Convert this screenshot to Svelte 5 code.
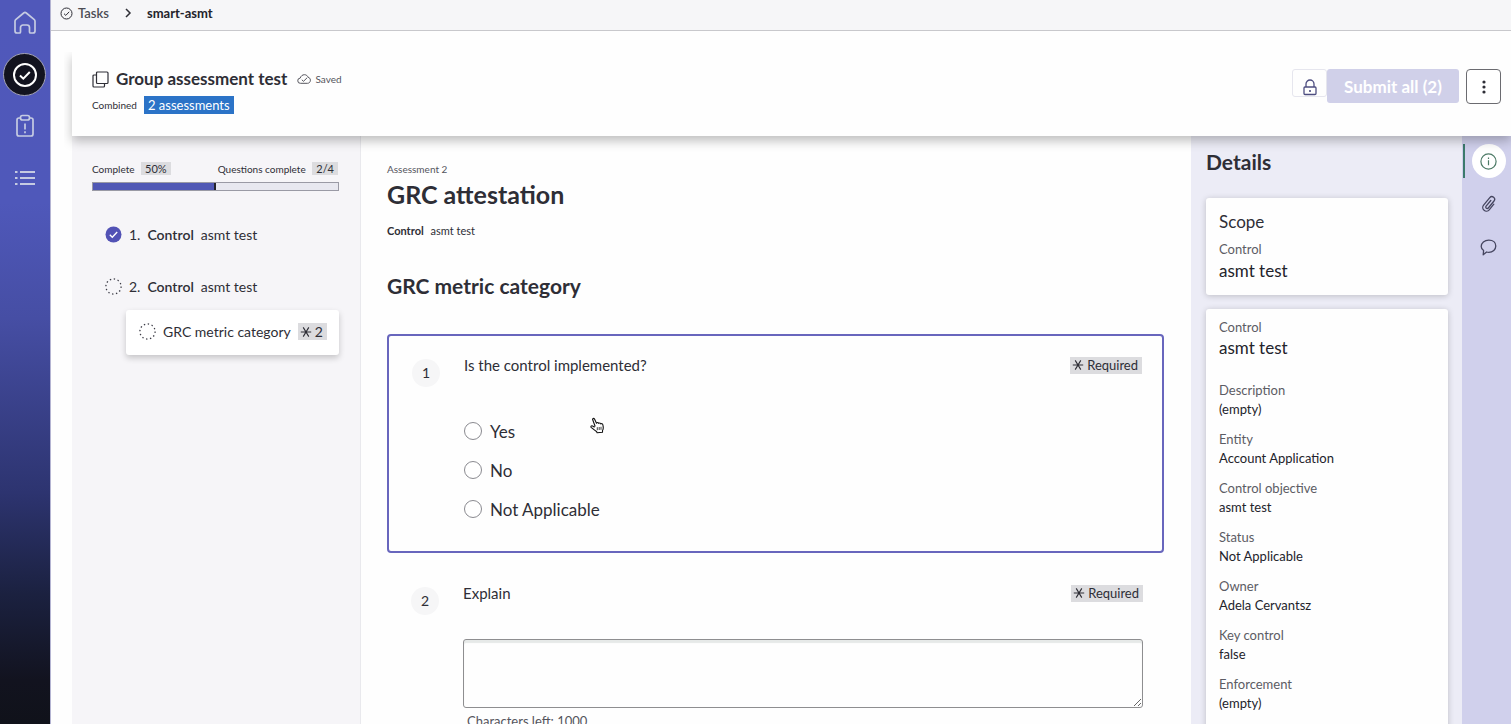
<script lang="ts">
    let answer = $state('');
    let explanation = $state('');

    const maxLength = 1000;
    const charsLeft = $derived(maxLength - explanation.length);

    const options = ['Yes', 'No', 'Not Applicable'];

    const details = [
        { label: 'Description', value: '(empty)' },
        { label: 'Entity', value: 'Account Application' },
        { label: 'Control objective', value: 'asmt test' },
        { label: 'Status', value: 'Not Applicable' },
        { label: 'Owner', value: 'Adela Cervantsz' },
        { label: 'Key control', value: 'false' },
        { label: 'Enforcement', value: '(empty)' },
    ];

    const complete = 50;
</script>

{#snippet asterisk()}
    <svg width="12" height="12" viewBox="0 0 12 12" fill="none" stroke="currentColor" stroke-width="1.1">
        <path d="M.8 6h10.400M3.200 1.400l5.600 9.200M8.800 1.400l-5.600 9.200" />
    </svg>
{/snippet}

{#snippet dotted()}
    <svg width="17" height="17" viewBox="0 0 17 17" fill="none" stroke="#3c3c46" stroke-width="1.300">
        <circle cx="8.500" cy="8.500" r="7.600" stroke-dasharray="1.400 2.580" />
    </svg>
{/snippet}

<div class="app">
    <nav class="sidebar" aria-label="Main">
        <a href="#home" class="nav-link" aria-label="Home">
            <svg width="24" height="24" viewBox="0 0 24 24" fill="none" stroke="currentColor" stroke-width="1.7" stroke-linejoin="round">
                <path d="M2 10.200a2 2 0 0 1 .7-1.500L10.700 2a2 2 0 0 1 2.600 0l8 6.700a2 2 0 0 1 .7 1.500V20a2 2 0 0 1-2 2h-2.500a1 1 0 0 1-1-1v-4.500a2.500 2.500 0 0 0-2.500-2.500h-4a2.500 2.500 0 0 0-2.500 2.500V21a1 1 0 0 1-1 1H4a2 2 0 0 1-2-2z" />
            </svg>
        </a>
        <a href="#tasks" class="nav-link active" aria-label="Tasks">
            <svg width="26" height="26" viewBox="0 0 26 26" fill="none" stroke="currentColor" stroke-width="2">
                <circle cx="13" cy="13" r="11" />
                <path d="M8 13.500l3.300 3.200 6.500-6.700" />
            </svg>
        </a>
        <a href="#issues" class="nav-link" aria-label="Issues">
            <svg width="20" height="24" viewBox="0 0 20 24" fill="none" stroke="currentColor" stroke-width="1.7">
                <path d="M5.500 4H4a2 2 0 0 0-2 2v14a2 2 0 0 0 2 2h12a2 2 0 0 0 2-2V6a2 2 0 0 0-2-2h-1.500" />
                <rect x="5.500" y="1.500" width="9" height="4.500" rx="2" />
                <path d="M10 9.500v6M10 17.200v2" />
            </svg>
        </a>
        <a href="#lists" class="nav-link" aria-label="Lists">
            <svg width="20" height="16" viewBox="0 0 20 16" fill="none" stroke="currentColor" stroke-width="1.8">
                <path d="M0 2h2.500M5 2h15M0 8h2.500M5 8h15M0 14h2.500M5 14h15" />
            </svg>
        </a>
    </nav>

    <div class="content">
        <div class="breadcrumb">
            <svg width="13" height="13" viewBox="0 0 13 13" fill="none" stroke="currentColor">
                <circle cx="6.500" cy="6.500" r="5.500" />
                <path d="M4 6.700l1.800 1.700 3.400-3.600" />
            </svg>
            <a href="#tasks">Tasks</a>
            <svg class="chevron" width="8" height="10" viewBox="0 0 8 10" fill="none" stroke="currentColor" stroke-width="1.500">
                <path d="M2 1l4 4-4 4" />
            </svg>
            <strong>smart-asmt</strong>
        </div>

        <div class="workspace">
            <header class="header">
                <div>
                    <div class="title-row">
                        <svg width="17" height="17" viewBox="0 0 17 17" fill="none" stroke="currentColor" stroke-width="1.200">
                            <rect x="4.500" y="1" width="11.500" height="11.500" rx="1" />
                            <path d="M4.500 4H2a1 1 0 0 0-1 1v10a1 1 0 0 0 1 1h9.500a1 1 0 0 0 1-1v-2.500" />
                        </svg>
                        <h1>Group assessment test</h1>
                        <span class="saved">
                            <svg width="14" height="10" viewBox="0 0 14 10" fill="none" stroke="currentColor">
                                <path d="M3.500 9.300a2.600 2.600 0 0 1-.3-5.200C3.800 2 5.500.7 7.500.7c1.700 0 3 1 3.600 2.600 1.300.2 2.300 1.400 2.300 2.900 0 1.800-1.200 3.100-2.900 3.100z" />
                                <path d="M4.800 5.800l1.700 1.500 3.700-3.600" />
                            </svg>
                            Saved
                        </span>
                    </div>
                    <div class="sub-row">
                        <span>Combined</span>
                        <span class="count">2 assessments</span>
                    </div>
                </div>
                <div class="actions">
                    <div class="submit-group">
                        <span class="lock">
                            <svg width="14" height="17" viewBox="0 0 14 17" fill="none" stroke="currentColor" stroke-width="1.300">
                                <rect x="1" y="8" width="12" height="7.500" rx="1" />
                                <path d="M3 8V5a4 4 0 0 1 8 0v3" />
                                <path d="M6.200 12h1.600" stroke-width="1.800" />
                            </svg>
                        </span>
                        <button class="submit" disabled>Submit all (2)</button>
                    </div>
                    <button class="more" aria-label="More actions">
                        <svg width="4" height="14" viewBox="0 0 4 14" fill="currentColor">
                            <circle cx="2" cy="2" r="1.600" />
                            <circle cx="2" cy="7" r="1.600" />
                            <circle cx="2" cy="12" r="1.600" />
                        </svg>
                    </button>
                </div>
            </header>

            <div class="columns">
                <aside class="outline">
                    <div class="progress-labels">
                        <span>Complete <span class="tag">{complete}%</span></span>
                        <span>Questions complete <span class="tag">2/4</span></span>
                    </div>
                    <div class="progress">
                        <div class="progress-fill" style="width: {complete}%"></div>
                    </div>

                    <a href="#control-1" class="step">
                        <svg width="17" height="17" viewBox="0 0 17 17">
                            <circle cx="8.500" cy="8.500" r="8" fill="#5252b5" />
                            <path d="M4.800 8.800l2.500 2.400 4.900-5.200" fill="none" stroke="#fff" stroke-width="1.400" />
                        </svg>
                        <span>1.</span><b>Control</b><span>asmt test</span>
                    </a>
                    <a href="#control-2" class="step">
                        {@render dotted()}
                        <span>2.</span><b>Control</b><span>asmt test</span>
                    </a>
                    <a href="#metric" class="step-card">
                        {@render dotted()}
                        <span>GRC metric category</span>
                        <span class="tag required-count">{@render asterisk()}2</span>
                    </a>
                </aside>

                <main class="assessment">
                    <p class="eyebrow">Assessment 2</p>
                    <h2>GRC attestation</h2>
                    <p class="target"><b>Control</b> <span>asmt test</span></p>
                    <h3>GRC metric category</h3>

                    <section class="question selected">
                        <span class="number">1</span>
                        <div class="question-body">
                            <div class="question-head">
                                <span id="q1">Is the control implemented?</span>
                                <span class="tag required">{@render asterisk()}Required</span>
                            </div>
                            <div class="options" role="radiogroup" aria-labelledby="q1">
                                {#each options as option}
                                    <label class="option">
                                        <input type="radio" name="implemented" value={option} bind:group={answer} />
                                        {option}
                                    </label>
                                {/each}
                            </div>
                        </div>
                        <svg class="hand" width="15" height="17" viewBox="0 0 15 17" fill="#fff" stroke="#111" stroke-width="1.100" stroke-linejoin="round">
                            <path d="M5.200 9.500L2.700 2.800C2.300 1.500 3.800.8 4.500 2l2 4.300c.4-1 1.900-1 2.200.1.600-.7 1.800-.5 2 .5.900-.6 2.100 0 2.200 1.100.500 2.200.9 3.600-.4 5.500v1.700l-5.400.6-.6-1.400C4.500 13.300 3.500 12.400 1.400 10.600.3 9.500 1.400 8.400 2.600 9l2 1.200" />
                            <path d="M7.300 10.200v3M9.200 10v3M11 9.800v3" fill="none" stroke-width=".8" />
                        </svg>
                    </section>

                    <section class="question">
                        <span class="number">2</span>
                        <div class="question-body">
                            <div class="question-head">
                                <label for="explain">Explain</label>
                                <span class="tag required">{@render asterisk()}Required</span>
                            </div>
                            <textarea id="explain" maxlength={maxLength} bind:value={explanation}></textarea>
                            <p class="hint">Characters left: {charsLeft}</p>
                        </div>
                    </section>
                </main>

                <aside class="details">
                    <h2>Details</h2>
                    <div class="card">
                        <h3>Scope</h3>
                        <div class="label">Control</div>
                        <div class="value large">asmt test</div>
                    </div>
                    <div class="card">
                        <div class="label">Control</div>
                        <div class="value large">asmt test</div>
                        <dl>
                            {#each details as item}
                                <div class="field">
                                    <dt class="label">{item.label}</dt>
                                    <dd class="value">{item.value}</dd>
                                </div>
                            {/each}
                        </dl>
                    </div>
                </aside>

                <div class="rail">
                    <button class="rail-btn active" aria-label="Details">
                        <svg width="17" height="17" viewBox="0 0 17 17" fill="none" stroke="currentColor" stroke-width="1.200">
                            <circle cx="8.500" cy="8.500" r="7.600" />
                            <path d="M8.500 7.300v5M8.500 4.500v1.500" />
                        </svg>
                    </button>
                    <button class="rail-btn" aria-label="Attachments">
                        <svg width="16" height="18" viewBox="0 0 16 18" fill="none" stroke="currentColor" stroke-width="1.300" stroke-linecap="round">
                            <path d="M12.800 9.200l-4.600 5.600a3.600 3.600 0 0 1-5.600-4.600l6.200-7.600a2.700 2.700 0 0 1 4.200 3.400l-5.700 7a1.400 1.400 0 0 1-2.200-1.800l4.700-5.700" />
                        </svg>
                    </button>
                    <button class="rail-btn" aria-label="Comments">
                        <svg width="17" height="17" viewBox="0 0 17 17" fill="none" stroke="currentColor" stroke-width="1.300" stroke-linejoin="round">
                            <path d="M3.200 15.800l.4-4.200C2.100 10.500 1.200 9.200 1.200 7.600 1.200 4 4.500 1.200 8.800 1.200s7 2.400 7 5.800-3 6.300-7 6.300c-.8 0-1.500-.1-2.200-.3z" />
                        </svg>
                    </button>
                </div>
            </div>
        </div>
    </div>

    <svg class="pointer" width="12" height="17" viewBox="0 0 12 17">
        <path d="M1 1v12.500l3-2.800 2.200 5 2.300-1-2.200-4.800h4z" fill="#000" stroke="#fff" stroke-width=".8" />
    </svg>
</div>

<style>
    :global(body) {
        margin: 0;
    }

    .app {
        display: flex;
        position: relative;
        height: 100vh;
        overflow: hidden;
        background: #fefefe;
        color: #2e2e36;
        font-family: Lato, sans-serif;
        font-size: 16px;
    }

    .app * {
        box-sizing: border-box;
    }

    h1, h2, h3, p, dl, dd {
        margin: 0;
    }

    svg {
        flex-shrink: 0;
    }

    a {
        color: inherit;
        text-decoration: none;
    }

    button {
        font-family: inherit;
        padding: 0;
    }

    .sidebar {
        display: flex;
        flex-direction: column;
        align-items: center;
        gap: 8px;
        width: 51px;
        flex-shrink: 0;
        padding: 1px 1px 0 0;
        border-right: 1px solid #b4b4d2;
        background: linear-gradient(#5058ba 0%, #4f58ba 28%, #464ea4 44%, #2d3470 68%, #1b2140 82%, #12131f 94%, #10121a 100%);
    }

    .nav-link {
        display: flex;
        align-items: center;
        justify-content: center;
        width: 43px;
        height: 44px;
        color: #c5cbe2;
    }

    .nav-link.active {
        height: 43px;
        border: 1px solid #a3a3b4;
        border-radius: 50%;
        background: #12131f;
        color: #fff;
    }

    .content {
        display: flex;
        flex-direction: column;
        flex: 1;
        min-width: 0;
    }

    .breadcrumb {
        display: flex;
        align-items: center;
        height: 31px;
        flex-shrink: 0;
        padding: 0 9px 4px;
        border-bottom: 1px solid #c8c8cc;
        background: #f6f6f8;
        font-size: 13px;
    }

    .breadcrumb a {
        margin-left: 5px;
        color: #4c4c54;
        font-weight: 600;
    }

    .breadcrumb strong {
        color: #23232b;
    }

    .chevron {
        margin: 0 15px;
    }

    .workspace {
        display: flex;
        flex-direction: column;
        flex: 1;
        min-height: 0;
        margin: 21px 0 0 21px;
    }

    .header {
        display: flex;
        justify-content: space-between;
        position: relative;
        z-index: 1;
        height: 84px;
        flex-shrink: 0;
        padding: 15px 10px 0 20px;
        background: #fefefe;
        box-shadow: 0 5px 10px rgba(0, 0, 0, 0.25);
        clip-path: inset(0 0 -20px -8px);
    }

    .title-row {
        display: flex;
        align-items: center;
        height: 24px;
    }

    h1 {
        margin: 0 10px 0 7px;
        font-size: 17px;
        line-height: 24px;
    }

    .saved {
        display: flex;
        align-items: center;
        gap: 4px;
        color: #55555d;
        font-size: 10px;
    }

    .sub-row {
        display: flex;
        align-items: center;
        gap: 7px;
        margin-top: 5px;
        font-size: 10px;
    }

    .count {
        padding: 0 4px;
        background: #2b73c7;
        color: #fff;
        font-size: 13px;
        line-height: 18px;
    }

    .actions {
        display: flex;
        gap: 7px;
        margin-top: 2px;
    }

    .submit-group {
        display: flex;
        align-items: flex-start;
    }

    .lock {
        display: flex;
        align-items: flex-end;
        justify-content: center;
        width: 35px;
        height: 28px;
        border: 1px solid #e6e6ee;
        border-radius: 3px;
        color: #4d4d80;
    }

    .submit {
        width: 132px;
        height: 34px;
        border: 0;
        border-radius: 3px;
        background: #d0d0e9;
        color: #fff;
        font-size: 17px;
        font-weight: 700;
    }

    .more {
        display: flex;
        align-items: center;
        justify-content: center;
        width: 35px;
        height: 35px;
        border: 1px solid #6b6b70;
        border-radius: 4px;
        background: #fff;
        color: #2e2e36;
    }

    .columns {
        display: flex;
        flex: 1;
        min-height: 0;
    }

    .outline {
        width: 289px;
        flex-shrink: 0;
        padding: 25px 21px 0 20px;
        border-right: 1px solid #e9e9ed;
        background: #f6f5f8;
    }

    .tag {
        display: inline-block;
        padding: 0 4px;
        background: #dcdcdf;
    }

    .progress-labels {
        display: flex;
        justify-content: space-between;
        margin-right: 1px;
        font-size: 10px;
        line-height: 16px;
    }

    .progress-labels .tag {
        margin-left: 4px;
        font-size: 11px;
        line-height: 13px;
    }

    .progress {
        height: 9px;
        margin-top: 5px;
        border: 1px solid #9a9aa5;
        background: #e8e8f0;
    }

    .progress-fill {
        height: 100%;
        border-right: 2px solid #23232b;
        background: #5058b5;
    }

    .step {
        display: flex;
        align-items: center;
        height: 24px;
        margin: 31px 0 0 13px;
        font-size: 14px;
    }

    .step + .step {
        margin-top: 28px;
    }

    .step span {
        margin-left: 7px;
    }

    .step b {
        margin-left: 7px;
        font-weight: 600;
    }

    .step-card {
        display: flex;
        align-items: center;
        gap: 7px;
        height: 45px;
        margin: 12px 0 0 34px;
        padding: 0 13px 2px;
        border-radius: 3px;
        background: #fff;
        box-shadow: 0 3px 6px rgba(0, 0, 0, 0.2);
        font-size: 14px;
        white-space: nowrap;
    }

    .required-count {
        display: flex;
        align-items: center;
        gap: 3px;
        padding: 0 4px 0 2px;
        line-height: 17px;
    }

    .assessment {
        flex: 1;
        min-width: 0;
        padding: 25px 27px 0 26px;
    }

    .eyebrow {
        color: #55555d;
        font-size: 10px;
        line-height: 16px;
    }

    .assessment h2 {
        margin-top: 1px;
        font-size: 25px;
        line-height: 32px;
    }

    .target {
        margin-top: 13px;
        font-size: 11px;
        line-height: 16px;
    }

    .target span {
        margin-left: 4px;
    }

    .assessment h3 {
        margin: 33px 0 34px;
        font-size: 21px;
        line-height: 28px;
    }

    .question {
        display: flex;
        gap: 24px;
        position: relative;
        padding: 19px 21px 0 24px;
    }

    .question.selected {
        height: 219px;
        margin-bottom: 10px;
        padding: 18px 20px 0 23px;
        border: 2px solid #6866bd;
        border-radius: 4px;
    }

    .number {
        width: 28px;
        height: 28px;
        margin-top: 5px;
        border-radius: 50%;
        background: #f6f6f7;
        font-size: 14px;
        line-height: 28px;
        text-align: center;
    }

    .question-body {
        flex: 1;
        min-width: 0;
    }

    .question-head {
        display: flex;
        align-items: center;
        justify-content: space-between;
        height: 22px;
        font-size: 15px;
    }

    .required {
        display: flex;
        align-items: center;
        gap: 3px;
        padding: 0 4px 0 2px;
        font-size: 13px;
        line-height: 17px;
    }

    .options {
        display: flex;
        flex-direction: column;
        gap: 17px;
        margin-top: 44px;
    }

    .option {
        display: flex;
        align-items: center;
        gap: 8px;
        height: 22px;
        font-size: 17px;
    }

    .option input {
        appearance: none;
        width: 18px;
        height: 18px;
        margin: 0;
        border: 1px solid #8a8a90;
        border-radius: 50%;
        background: #fff;
    }

    .option input:checked {
        border: 5px solid #5252b5;
    }

    .hand {
        position: absolute;
        top: 81px;
        left: 201px;
    }

    textarea {
        display: block;
        width: 100%;
        height: 69px;
        margin-top: 35px;
        border: 1px solid #8e8e90;
        border-radius: 3px;
        background: #fefefe;
        box-shadow: inset 0 3px 1px #e6e9e8;
        font-family: inherit;
        font-size: 15px;
    }

    .hint {
        margin: 4px 0 0 4px;
        color: #55555d;
        font-size: 13px;
        line-height: 18px;
    }

    .details {
        width: 271px;
        flex-shrink: 0;
        padding: 12px 14px 0 15px;
        background: #ececf6;
    }

    .details h2 {
        font-size: 21px;
        line-height: 28px;
    }

    .card {
        margin-top: 14px;
        padding: 9px 13px 20px;
        border-radius: 3px;
        background: #fefefe;
        box-shadow: 0 1px 6px rgba(0, 0, 0, 0.2);
    }

    h2 + .card {
        margin-top: 22px;
        padding: 13px;
    }

    .card h3 {
        margin-bottom: 7px;
        font-size: 17px;
        font-weight: 400;
        line-height: 22px;
    }

    .label {
        color: #5c5c64;
        font-size: 13px;
        line-height: 19px;
    }

    .value {
        color: #23232b;
        font-size: 13px;
        line-height: 19px;
    }

    .value.large {
        font-size: 17px;
        line-height: 22px;
    }

    .card h3 ~ .value {
        line-height: 23px;
    }

    dl {
        display: flex;
        flex-direction: column;
        gap: 11px;
        margin-top: 22px;
    }

    .rail {
        display: flex;
        flex-direction: column;
        align-items: center;
        gap: 9px;
        width: 49px;
        flex-shrink: 0;
        padding: 8px 0 0 4px;
        background: #d0d0ec;
    }

    .rail-btn {
        display: flex;
        align-items: center;
        justify-content: center;
        position: relative;
        width: 34px;
        height: 34px;
        border: 0;
        border-radius: 50%;
        background: transparent;
        color: #45455f;
    }

    .rail-btn.active {
        background: #fff;
        color: #4c7a66;
    }

    .rail-btn.active::before {
        content: '';
        position: absolute;
        top: 0;
        left: -9px;
        width: 2px;
        height: 34px;
        background: #3b7a6c;
    }

    .pointer {
        position: absolute;
        top: 67px;
        left: 752px;
    }
</style>
